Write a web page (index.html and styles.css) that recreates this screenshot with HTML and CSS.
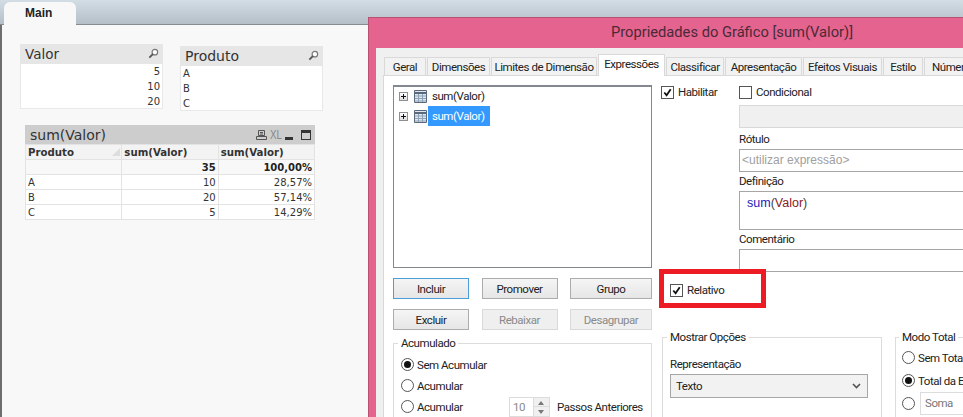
FILE: index.html
```html
<!DOCTYPE html>
<html lang="pt">
<head>
    <meta charset="UTF-8">
    <title>Propriedades do Gráfico</title>
    <link rel="stylesheet" href="styles.css">
</head>
<body>
    <div class="tabbar">
        <div class="sheet-tab">Main</div>
    </div>

    <div class="sheet">
        <div class="listbox listbox-valor">
            <div class="listbox-head">
                <span>Valor</span>
                <svg class="search-icon" viewBox="0 0 12 12"><circle cx="7.5" cy="4.5" r="3" fill="#fff" stroke="#777" stroke-width="1.3"/><path d="M5.3 6.7 1.5 10.500" stroke="#555" stroke-width="2"/></svg>
            </div>
            <div class="listbox-row num">5</div>
            <div class="listbox-row num">10</div>
            <div class="listbox-row num">20</div>
        </div>

        <div class="listbox listbox-produto">
            <div class="listbox-head">
                <span>Produto</span>
                <svg class="search-icon" viewBox="0 0 12 12"><circle cx="7.5" cy="4.5" r="3" fill="#fff" stroke="#777" stroke-width="1.3"/><path d="M5.3 6.7 1.5 10.500" stroke="#555" stroke-width="2"/></svg>
            </div>
            <div class="listbox-row">A</div>
            <div class="listbox-row">B</div>
            <div class="listbox-row">C</div>
        </div>

        <div class="chart">
            <div class="chart-head">
                <span class="chart-title">sum(Valor)</span>
                <svg class="chart-icon" width="11" height="10" viewBox="0 0 11 10"><path d="M2.500.5h6v5h-6zM.5 6.500h10v3H.5zM4 2.500h3M4 4h3" fill="none" stroke="#555"/></svg>
                <span class="chart-xl">XL</span>
                <span class="chart-min"></span>
                <span class="chart-max"></span>
            </div>
            <table class="chart-table">
                <tr class="head"><td>Produto<span class="sort-mark"></span></td><td>sum(Valor)</td><td>sum(Valor)</td></tr>
                <tr class="total"><td></td><td class="num">35</td><td class="num">100,00%</td></tr>
                <tr><td>A</td><td class="num">10</td><td class="num">28,57%</td></tr>
                <tr><td>B</td><td class="num">20</td><td class="num">57,14%</td></tr>
                <tr><td>C</td><td class="num">5</td><td class="num">14,29%</td></tr>
            </table>
        </div>
    </div>

    <div class="dialog">
        <div class="dialog-title">Propriedades do Gráfico [sum(Valor)]</div>
        <div class="dialog-body">
            <div class="tabs">
                <div class="tab tab-geral">Geral</div>
                <div class="tab tab-dim">Dimensões</div>
                <div class="tab tab-lim">Limites de Dimensão</div>
                <div class="tab tab-expr active">Expressões</div>
                <div class="tab tab-class">Classificar</div>
                <div class="tab tab-apres">Apresentação</div>
                <div class="tab tab-efeitos">Efeitos Visuais</div>
                <div class="tab tab-estilo">Estilo</div>
                <div class="tab tab-num">Número</div>
            </div>

            <div class="panel">
                <div class="left-col">
                    <div class="tree">
                        <div class="tree-row">
                            <span class="plus-box"></span>
                            <svg class="table-icon" viewBox="0 0 13 13"><path d="M.5.5h12v12H.5z" fill="#dfe6ee" stroke="#5a6a7c"/><path d="M.5 3h12" stroke="#5a6a7c" stroke-width="2"/><path d="M1 6h11M1 8.500h11M1 11h11M4.500 4v8M8.500 4v8" stroke="#8fa3b8"/></svg>
                            <span class="tree-label">sum(Valor)</span>
                        </div>
                        <div class="tree-row">
                            <span class="plus-box"></span>
                            <svg class="table-icon" viewBox="0 0 13 13"><path d="M.5.5h12v12H.5z" fill="#dfe6ee" stroke="#5a6a7c"/><path d="M.5 3h12" stroke="#5a6a7c" stroke-width="2"/><path d="M1 6h11M1 8.500h11M1 11h11M4.500 4v8M8.500 4v8" stroke="#8fa3b8"/></svg>
                            <span class="tree-label selected">sum(Valor)</span>
                        </div>
                    </div>

                    <div class="button-grid">
                        <button class="btn default">Incluir</button>
                        <button class="btn">Promover</button>
                        <button class="btn">Grupo</button>
                        <button class="btn">Excluir</button>
                        <button class="btn" disabled>Rebaixar</button>
                        <button class="btn" disabled>Desagrupar</button>
                    </div>

                    <fieldset class="group group-acum">
                        <legend>Acumulado</legend>
                        <div class="radio-row"><span class="radio on"></span>Sem Acumular</div>
                        <div class="radio-row"><span class="radio"></span>Acumular</div>
                        <div class="radio-row">
                            <span class="radio"></span><span class="radio-text">Acumular</span>
                            <span class="spin">
                                <span class="spin-value">10</span>
                                <span class="spin-arrows">
                                    <span class="arrow-up"></span>
                                    <span class="arrow-down"></span>
                                </span>
                            </span>
                            <span class="spin-label">Passos Anteriores</span>
                        </div>
                    </fieldset>
                </div>

                <div class="right-col">
                    <div class="top-fields">
                        <div class="check-row"><span class="check"><svg viewBox="0 0 12 12"><path d="M2.500 6 5 9 9.500 2.500" fill="none" stroke="#111" stroke-width="2"/></svg></span>Habilitar</div>
                        <div class="fields">
                            <div class="check-row"><span class="check"></span>Condicional</div>
                            <div class="field field-disabled"></div>
                            <div class="field-label">Rótulo</div>
                            <div class="field field-rotulo">&lt;utilizar expressão&gt;</div>
                            <div class="field-label">Definição</div>
                            <div class="field field-def"><span class="kw">sum</span><span class="par">(</span><span class="ident">Valor</span><span class="par">)</span></div>
                            <div class="field-label">Comentário</div>
                            <div class="field field-com"></div>
                        </div>
                    </div>

                    <div class="check-row relativo"><span class="check"><svg viewBox="0 0 12 12"><path d="M2.500 6 5 9 9.500 2.500" fill="none" stroke="#111" stroke-width="2"/></svg></span>Relativo</div>

                    <div class="groups">
                        <fieldset class="group group-opcoes">
                            <legend>Mostrar Opções</legend>
                            <div class="field-label">Representação</div>
                            <div class="select">Texto<svg width="9" height="6" viewBox="0 0 9 6"><path d="M1 1l3.500 3.500L8 1" fill="none" stroke="#555" stroke-width="1.600"/></svg></div>
                        </fieldset>
                        <fieldset class="group group-total">
                            <legend>Modo Total</legend>
                            <div class="radio-row"><span class="radio"></span>Sem Totais</div>
                            <div class="radio-row"><span class="radio on"></span>Total da Expressão</div>
                            <div class="radio-row"><span class="radio"></span><span class="soma">Soma</span></div>
                        </fieldset>
                    </div>
                </div>

                <div class="annotation"></div>
            </div>
        </div>
    </div>
</body>
</html>
```

FILE: styles.css
```css
* {
    margin: 0;
    padding: 0;
    box-sizing: border-box;
}

html, body {
    height: 417px;
    overflow: hidden;
}

body {
    position: relative;
    font-family: "DejaVu Sans", sans-serif;
    background: linear-gradient(#6e6e6e, #6e6e6e) left top / 2px 100% no-repeat, #f8f8f8;
}

/* sheet tabs */
.tabbar {
    height: 25px;
    padding: 2px 0 0 4px;
    background: linear-gradient(#d3dde4, #b4bfc8);
    border-bottom: 1px solid #868b90;
}

.sheet-tab {
    width: 72px;
    height: 23px;
    padding: 2px 0 0 21px;
    background: #f8f8f8;
    border-radius: 6px 6px 0 0;
    font: bold 12px "Liberation Sans", sans-serif;
    line-height: 18px;
    color: #222;
}

/* sheet objects sit on a free canvas */
.listbox {
    position: absolute;
    width: 143px;
    height: 65px;
    background: #fff;
    border: 1px solid #e8e8e8;
    border-top: 0;
    font-size: 10px;
    color: #333;
}

.listbox-valor { left: 20px; top: 44px; }
.listbox-produto { left: 180px; top: 46px; }

.listbox-head {
    display: flex;
    align-items: center;
    justify-content: space-between;
    height: 20px;
    margin: 0 -1px;
    padding: 0 4px 0 5px;
    background: #e6e6e6;
    font-size: 13.500px;
    color: #333;
}

.listbox-produto .listbox-head { font-size: 14px; }

.search-icon {
    width: 11px;
    height: 11px;
    margin-bottom: 2px;
}

.listbox-row {
    height: 15px;
    padding: 0 2px;
    line-height: 15px;
}

.listbox-row.num { text-align: right; }

.chart {
    position: absolute;
    left: 25px;
    top: 125px;
    width: 290px;
}

.chart-head {
    display: flex;
    align-items: center;
    height: 19px;
    padding: 0 4px 0 5px;
    background: #cdcdcd;
    color: #333;
}

.chart-title {
    flex: 1;
    font-size: 14px;
}

.chart-icon { margin-right: 3px; }

.chart-xl {
    width: 11px;
    margin-right: 4px;
    font: 13px "Liberation Sans", sans-serif;
    color: #888;
    transform: scaleX(.75);
    transform-origin: left;
}

.chart-min {
    width: 8px;
    height: 3px;
    margin: 7px 8px 0 0;
    background: #333;
}

.chart-max {
    width: 10px;
    height: 10px;
    border: 1px solid #333;
    border-top-width: 3px;
}

.chart-table {
    width: 290px;
    border-collapse: collapse;
    table-layout: fixed;
    background: #fff;
    font-size: 10px;
    color: #333;
}

.chart-table td {
    height: 15px;
    padding: 0 2px;
    border: 1px solid #e3e3e3;
    line-height: 13px;
}

.chart-table .num { text-align: right; }

.chart-table .head td {
    background: #f3f3f3;
    font-weight: bold;
    font-size: 10.200px;
}

.chart-table .head td:first-child { position: relative; }

.sort-mark {
    position: absolute;
    right: 1px;
    bottom: 3px;
    border-left: 8px solid transparent;
    border-bottom: 8px solid #ddd;
}

.chart-table .total td {
    background: #f8f8f8;
    font-weight: bold;
    color: #222;
}

/* properties dialog, cut off by the window like in the capture */
.dialog {
    position: absolute;
    left: 368px;
    top: 17px;
    width: 595px;
    height: 400px;
    overflow: hidden;
    background: #e5638f;
    border-top: 1px solid #b8506f;
    border-left: 1px solid #b8506f;
    font: 11.500px Roboto, sans-serif;
    letter-spacing: -.45px;
    color: #222;
}

.dialog-title {
    height: 30px;
    padding-left: 242px;
    font-size: 14.700px;
    letter-spacing: 0;
    line-height: 29px;
    white-space: nowrap;
    color: #4a2a36;
}

.dialog-body {
    margin-left: 7px;
    height: 400px;
    padding: 7px 0 0 7px;
    background: #f0f0f0;
}

.tabs {
    display: flex;
    height: 20px;
    align-items: flex-end;
}

.tab {
    flex: none;
    height: 18px;
    margin-right: 1px;
    text-align: center;
    line-height: 18px;
    white-space: nowrap;
    background: #f2f2f2;
    border: 1px solid #d9d9d9;
    border-bottom: 0;
}

.tab-geral { width: 42px; margin-left: 1px; }
.tab-dim { width: 63px; }
.tab-lim { width: 106px; }
.tab-expr { width: 67px; }
.tab-class { width: 58px; }
.tab-apres { width: 77px; }
.tab-efeitos { width: 79px; }
.tab-estilo { width: 40px; }
.tab-num { width: 70px; text-align: left; padding-left: 7px; }

.tab.active {
    height: 22px;
    margin-bottom: -1px;
    position: relative;
    background: #fff;
    line-height: 19px;
    z-index: 1;
}

.panel {
    position: relative;
    display: grid;
    grid-template-columns: 259px 1fr;
    column-gap: 9px;
    height: 360px;
    padding: 9px 0 0 9px;
    background: #fff;
    border-left: 1px solid #d9d9d9;
    border-top: 1px solid #d9d9d9;
}

.tree {
    height: 183px;
    background: #fff;
    border: 1px solid #828790;
    box-shadow: inset 0 1px 0 #828790;
}

.tree-row {
    display: flex;
    align-items: center;
    height: 20px;
    padding-left: 5px;
}

.plus-box {
    position: relative;
    width: 9px;
    height: 9px;
    margin-right: 6px;
    background: linear-gradient(#fff, #ddd);
    border: 1px solid #8e8f8f;
}

.plus-box::before {
    content: "";
    position: absolute;
    left: 1px;
    top: 3px;
    width: 5px;
    height: 1px;
    background: #111;
}

.plus-box::after {
    content: "";
    position: absolute;
    left: 3px;
    top: 1px;
    width: 1px;
    height: 5px;
    background: #111;
}

.table-icon {
    width: 13px;
    height: 13px;
    margin-right: 1px;
}

.tree-label {
    width: 62px;
    height: 20px;
    padding-left: 4px;
    line-height: 21px;
}

.tree-label.selected {
    background: #3399ff;
    color: #fff;
}

.button-grid {
    display: grid;
    grid-template-columns: 76px 76px 82px;
    justify-content: space-between;
    row-gap: 10px;
    margin-top: 10px;
}

.btn {
    height: 21px;
    background: linear-gradient(#f5f5f5, #e6e6e6);
    border: 1px solid #acacac;
    font: inherit;
    letter-spacing: inherit;
    color: #222;
}

.btn.default {
    border-color: #4a9fd8;
}

.btn:disabled {
    background: #efefef;
    border-color: #d9d9d9;
    color: #8a8a8a;
}

.group {
    border: 1px solid #dcdcdc;
    padding: 0 7px;
}

.group legend {
    margin-left: -3px;
    padding: 0 3px;
    line-height: 16px;
}

.group-acum {
    height: 100px;
    margin-top: 5px;
    padding-top: 3px;
}

.radio-row {
    display: flex;
    align-items: center;
    height: 21px;
    white-space: nowrap;
}

.radio {
    position: relative;
    flex: none;
    width: 13px;
    height: 13px;
    margin-right: 3px;
    background: #fff;
    border: 1px solid #555;
    border-radius: 50%;
}

.radio.on::after {
    content: "";
    position: absolute;
    left: 2px;
    top: 2px;
    width: 7px;
    height: 7px;
    background: #111;
    border-radius: 50%;
}

.radio-text { width: 92px; }

.spin {
    display: flex;
    width: 41px;
    height: 20px;
    margin-right: 7px;
    border: 1px solid #dcdcdc;
    color: #8a8a8a;
}

.spin-value {
    flex: 1;
    padding-left: 3px;
    line-height: 18px;
}

.spin-arrows {
    display: flex;
    flex-direction: column;
    width: 16px;
    background: #f0f0f0;
    border-left: 1px solid #dcdcdc;
}

.arrow-up, .arrow-down {
    flex: 1;
    position: relative;
}

.arrow-down { border-top: 1px solid #dcdcdc; }

.arrow-up::after, .arrow-down::after {
    content: "";
    position: absolute;
    left: 4px;
    top: 3px;
    border: 3.500px solid transparent;
    border-top: 0;
    border-bottom: 4px solid #777;
}

.arrow-down::after {
    border-bottom: 0;
    border-top: 4px solid #777;
}

.top-fields {
    display: grid;
    grid-template-columns: 78px 1fr;
}

.check-row {
    display: flex;
    align-items: center;
    height: 14px;
    white-space: nowrap;
}

.check {
    flex: none;
    width: 13px;
    height: 13px;
    margin-right: 4px;
    background: #fff;
    border: 1px solid #555;
}

.check svg {
    display: block;
    width: 11px;
    height: 11px;
}

.field-label {
    height: 19px;
    line-height: 19px;
}

.field {
    height: 23px;
    width: 300px;
    padding: 0 2px;
    background: #fff;
    border: 1px solid #a6a6a6;
    font: 12px/21px "Liberation Sans", sans-serif;
    letter-spacing: 0;
}

.field-disabled {
    margin-top: 6px;
    margin-bottom: 2px;
    background: #f0f0f0;
    border-color: #d9d9d9;
}

.field-rotulo { color: #a0a0a0; }

.field-def {
    height: 39px;
    padding: 1px 7px;
    font-size: 12.500px;
}

.kw { color: #2222bb; }
.par { color: #444; }
.ident { color: #8b1a1a; }

.relativo {
    margin: 11px 0 0 9px;
}

.annotation {
    position: absolute;
    left: 275px;
    top: 193px;
    width: 107px;
    height: 39px;
    border: 5px solid #ed1c24;
}

.groups {
    display: flex;
    gap: 13px;
    margin: 32px 0 0 1px;
}

.group-opcoes {
    flex: none;
    width: 220px;
    height: 100px;
    padding-top: 10px;
}

.group-total {
    flex: none;
    width: 200px;
    height: 100px;
    padding: 1px 6px 0;
}

.group-total .radio-row { height: 23px; }

.select {
    display: flex;
    align-items: center;
    justify-content: space-between;
    width: 198px;
    height: 24px;
    padding: 0 6px 0 5px;
    background: #f2f2f2;
    border: 1px solid #a6a6a6;
}

.soma {
    width: 80px;
    height: 23px;
    margin-left: 2px;
    padding-left: 4px;
    border: 1px solid #dcdcdc;
    color: #777;
    line-height: 21px;
}
```
